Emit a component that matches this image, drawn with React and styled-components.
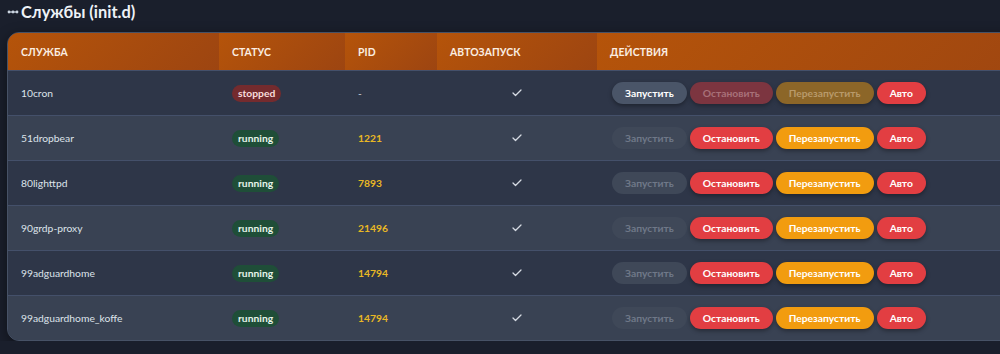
import styled, { createGlobalStyle } from "styled-components";
import { FiCheck } from "react-icons/fi";

const GlobalStyle = createGlobalStyle`
  html, body {
    margin: 0;
    padding: 0;
    background: #1a1f2c;
    overflow: hidden;
  }
  body {
    font-family: Lato, "Open Sans", "Liberation Sans", sans-serif;
    color: #e2e8f0;
  }
`;

const services = [
  { name: "10cron", status: "stopped", pid: null },
  { name: "51dropbear", status: "running", pid: 1221 },
  { name: "80lighttpd", status: "running", pid: 7893 },
  { name: "90grdp-proxy", status: "running", pid: 21496 },
  { name: "99adguardhome", status: "running", pid: 14794 },
  { name: "99adguardhome_koffe", status: "running", pid: 14794 },
];

const columns = "211px 126px 92px 160px 1fr";

function App() {
  return (
    <Page>
      <GlobalStyle />
      <Title>
        <Dots>
          <svg width="12" height="4" viewBox="0 0 12 4">
            <circle cx="2" cy="2" r="1.4" fill="#cbd5e0" />
            <circle cx="6" cy="2" r="1.4" fill="#cbd5e0" />
            <circle cx="10" cy="2" r="1.4" fill="#cbd5e0" />
            <rect x="2" y="1.4" width="8" height="1.2" fill="#cbd5e0" />
          </svg>
        </Dots>
        Службы (init.d)
      </Title>
      <Card>
        <HeaderRow>
          <HeaderCell>Служба</HeaderCell>
          <HeaderCell>Статус</HeaderCell>
          <HeaderCell>PID</HeaderCell>
          <HeaderCell>Автозапуск</HeaderCell>
          <HeaderCell>Действия</HeaderCell>
        </HeaderRow>
        {services.map((s, i) => {
          const running = s.status === "running";
          return (
            <Row key={s.name} $alt={i % 2 === 1}>
              <Cell>{s.name}</Cell>
              <Cell>
                <Badge $running={running}>{s.status}</Badge>
              </Cell>
              <Cell>{s.pid ? <Pid>{s.pid}</Pid> : <Dash>-</Dash>}</Cell>
              <Cell $center>
                <FiCheck size={12} color="#d6dbe3" strokeWidth={2.5} />
              </Cell>
              <Actions>
                <Button $kind="start" disabled={running}>Запустить</Button>
                <Button $kind="stop" disabled={!running}>Остановить</Button>
                <Button $kind="restart" disabled={!running}>Перезапустить</Button>
                <Button $kind="auto">Авто</Button>
              </Actions>
            </Row>
          );
        })}
      </Card>
    </Page>
  );
}

const Page = styled.div`
  padding: 0 7px;
  width: 1080px;
`;

const Title = styled.h2`
  display: flex;
  align-items: center;
  gap: 1px;
  margin: 0;
  height: 24px;
  margin-top: -1px;
  font-size: 16.4px;
  font-weight: 700;
  color: #eef2f7;
`;

const Dots = styled.span`
  display: flex;
  align-items: center;
  width: 13px;
  padding-top: 1px;
`;

const Card = styled.div`
  margin-top: 9px;
  border: 1px solid #475266;
  border-radius: 12px;
  overflow: hidden;
  background: #2d3648;
  box-shadow: 0 4px 14px rgba(0, 0, 0, 0.45);
`;

const HeaderRow = styled.div`
  display: grid;
  grid-template-columns: ${columns};
  height: 37px;
  background: linear-gradient(135deg, #b1520b, #9b4311);
`;

const HeaderCell = styled.div`
  display: flex;
  align-items: center;
  padding: 0 13px;
  background: linear-gradient(135deg, #b5540a 0%, #9d4511 100%);
  font-size: 10.4px;
  font-weight: 700;
  text-transform: uppercase;
  color: #fbeee2;
  letter-spacing: 0.1px;
`;

const Row = styled.div`
  display: grid;
  grid-template-columns: ${columns};
  height: 44px;
  background: ${(p) => (p.$alt ? "#394253" : "#2e3648")};
  border-top: 1px solid #44506a;
`;

const Cell = styled.div`
  display: flex;
  align-items: center;
  padding: 0 13px;
  font-size: 10.3px;
  color: #dde3ea;
  justify-content: ${(p) => (p.$center ? "center" : "flex-start")};
`;

const Badge = styled.span`
  display: inline-flex;
  align-items: center;
  height: 17px;
  padding: 0 6px;
  border-radius: 9px;
  font-size: 10.3px;
  font-weight: 700;
  background: ${(p) => (p.$running ? "#1f4e38" : "#742b2e")};
  color: ${(p) => (p.$running ? "#e6f4ea" : "#f7dcdc")};
`;

const Pid = styled.span`
  font-weight: 700;
  color: #e9b824;
`;

const Dash = styled.span`
  color: #d0d6de;
`;

const Actions = styled.div`
  display: flex;
  align-items: center;
  gap: 3px;
  padding: 0 15px;
`;

const palette = {
  start: { bg: "#4a5568", off: "#3f4858", fg: "#ffffff", offFg: "#6f7888" },
  stop: { bg: "#e23e42", off: "#7c3540", fg: "#ffffff", offFg: "#a87179" },
  restart: { bg: "#f29c0f", off: "#8c6628", fg: "#ffffff", offFg: "#b89a6a" },
  auto: { bg: "#e23e42", off: "#e23e42", fg: "#ffffff", offFg: "#ffffff" },
};

const Button = styled.button`
  height: 22px;
  padding: 0 13px;
  border: none;
  border-radius: 11px;
  font-family: Lato, Roboto, "Liberation Sans", sans-serif;
  font-size: 10.3px;
  font-weight: 700;
  cursor: pointer;
  background: ${(p) => palette[p.$kind].bg};
  color: ${(p) => palette[p.$kind].fg};
  box-shadow: 0 2px 4px rgba(0, 0, 0, 0.35);

  &:disabled {
    background: ${(p) => palette[p.$kind].off};
    color: ${(p) => palette[p.$kind].offFg};
    cursor: default;
    box-shadow: ${(p) => (p.$kind === "start" ? "none" : "0 2px 4px rgba(0,0,0,0.3)")};
  }
`;

export default App;
